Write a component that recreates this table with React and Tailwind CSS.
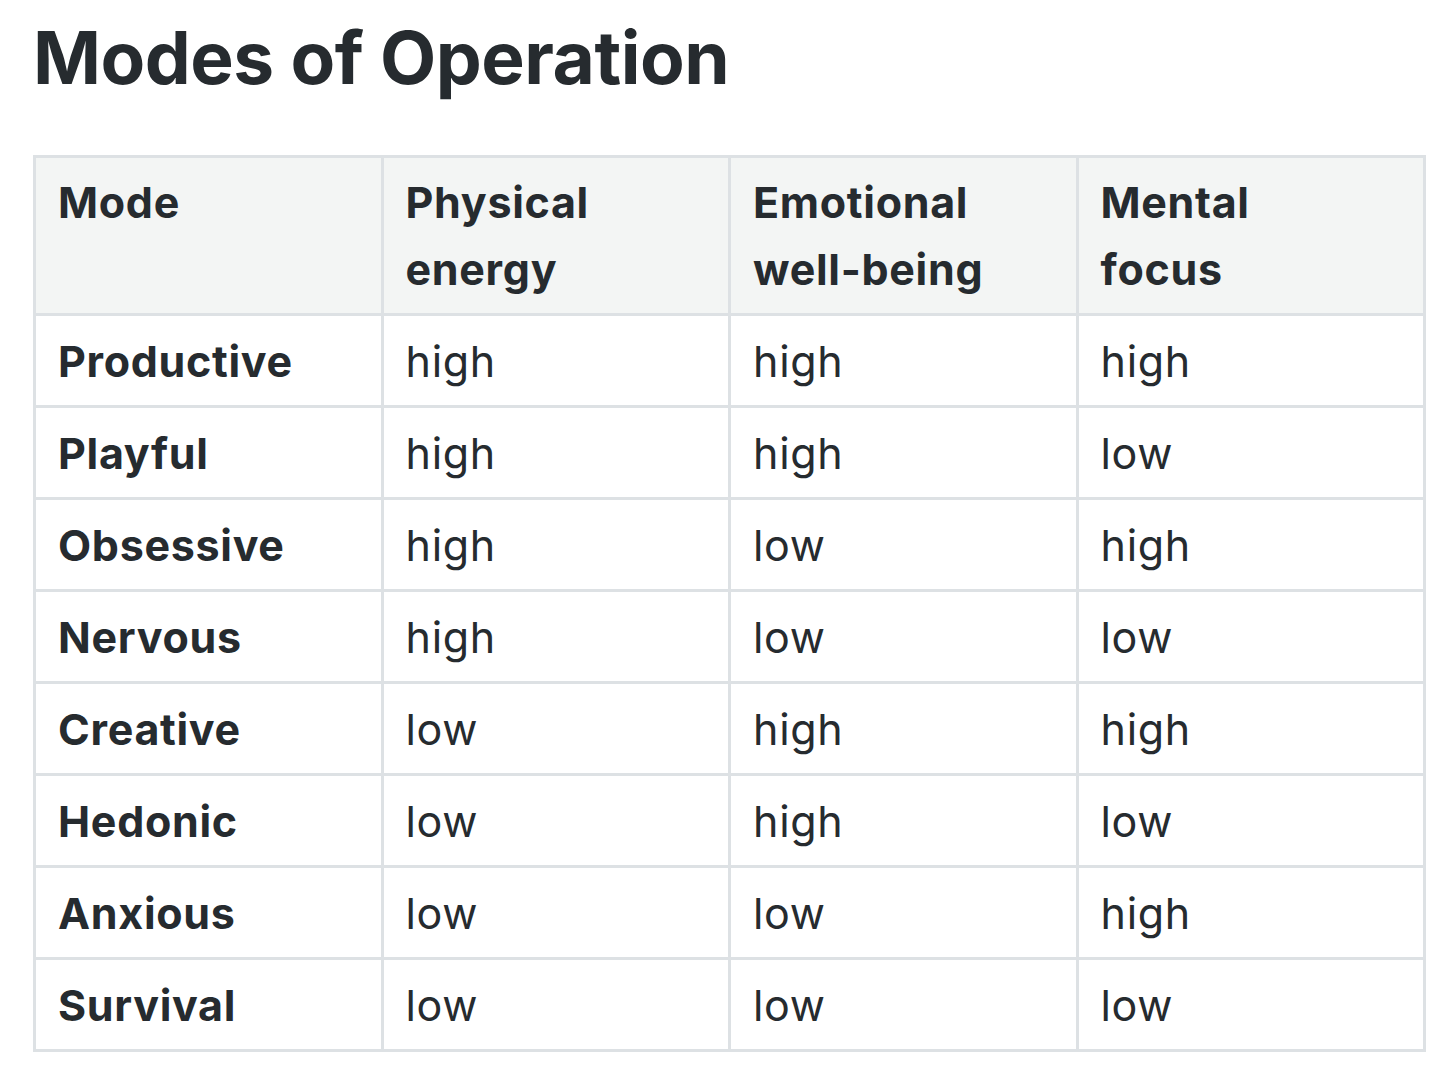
export default function App() {
  const rows = [
    ["Productive", "high", "high", "high"],
    ["Playful", "high", "high", "low"],
    ["Obsessive", "high", "low", "high"],
    ["Nervous", "high", "low", "low"],
    ["Creative", "low", "high", "high"],
    ["Hedonic", "low", "high", "low"],
    ["Anxious", "low", "low", "high"],
    ["Survival", "low", "low", "low"],
  ];
  const headers = [["Mode"], ["Physical", "energy"], ["Emotional", "well-being"], ["Mental", "focus"]];
  return (
    <div className="min-h-[1069px] bg-white text-[#262b2f] font-['Inter','Noto_Sans',sans-serif] px-[33px] pt-[13px]">
      <h2 className="text-[73px] font-bold leading-[90px] tracking-[-0.5px]">Modes of Operation</h2>
      <table className="mt-[52px] w-[1393px] border-collapse table-fixed">
        <thead>
          <tr>
            {headers.map((h, i) => (
              <th key={i} className="border-[3px] border-[#dde1e4] bg-[#f3f5f4] text-left align-top font-bold text-[43px] tracking-[0.7px] leading-[67px] px-[22px] pt-[11px] pb-[10px]">
                {h.map((l, j) => (
                  <div key={j}>{l}</div>
                ))}
              </th>
            ))}
          </tr>
        </thead>
        <tbody>
          {rows.map((r, i) => (
            <tr key={i}>
              {r.map((c, j) => (
                <td key={j} className={`border-[3px] border-[#dde1e4] text-[43px] tracking-[0.7px] leading-[67px] px-[22px] h-[92px] align-middle ${j === 0 ? "font-bold" : "font-normal"}`}>
                  <div className="pt-[2px]">{c}</div>
                </td>
              ))}
            </tr>
          ))}
        </tbody>
      </table>
    </div>
  );
}
